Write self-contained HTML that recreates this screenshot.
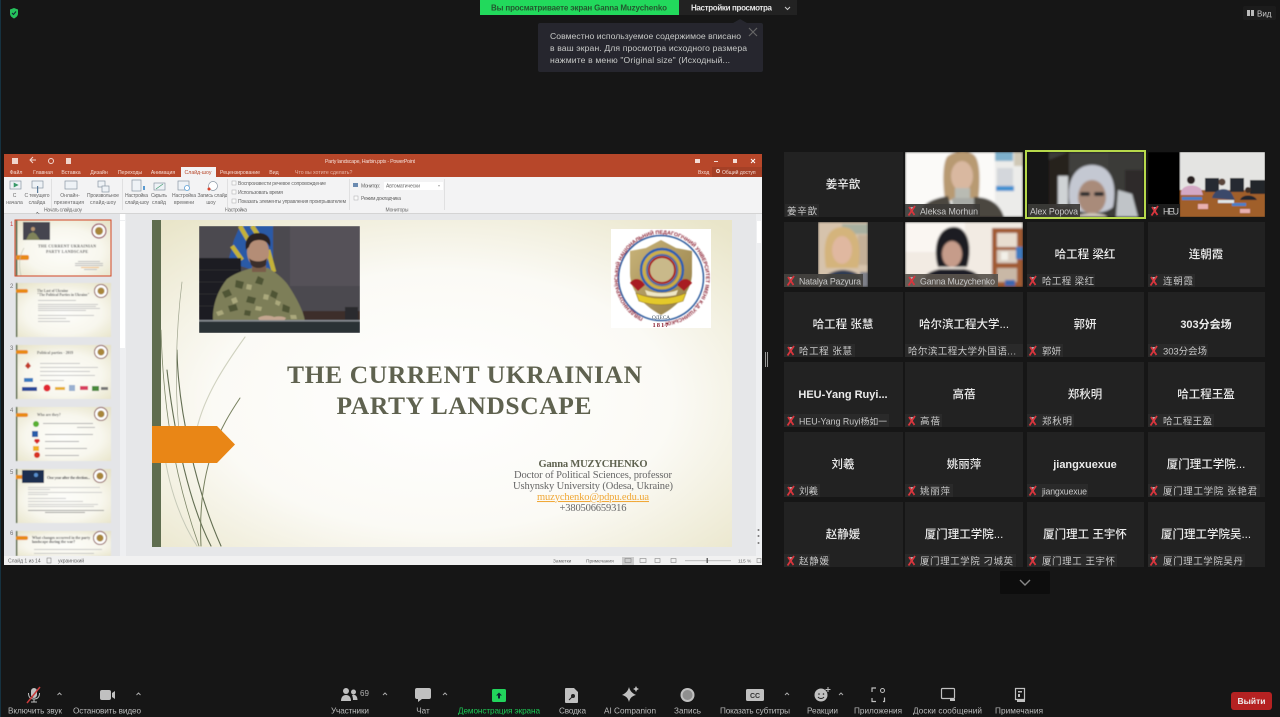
<!DOCTYPE html>
<html><head><meta charset="utf-8"><style>
html,body{margin:0;padding:0;background:#141414;width:1280px;height:717px;overflow:hidden}
svg{display:block}
text{font-family:"Liberation Sans","Noto Sans CJK SC",sans-serif}
.s{font-family:"Liberation Serif","Noto Serif CJK SC",serif}
.c{fill:#ececec;font-size:11.500px;font-weight:500;text-anchor:middle}
.cb{font-weight:bold;font-size:11px}
.l{fill:#c8c8c8;font-size:9.500px}
.la{font-size:8.800px}
.t{fill:#bdbdbd;font-size:8.200px;text-anchor:middle}
.r{fill:#666;font-size:5px}
.rm{fill:#666;font-size:5px;text-anchor:middle}
.tab{fill:#f6ddd5;font-size:5.200px;text-anchor:middle}
</style></head><body>
<svg width="1280" height="717" viewBox="0 0 1280 717" xmlns="http://www.w3.org/2000/svg">
<defs>
<filter id="b0" filterUnits="userSpaceOnUse" x="0" y="0" width="1280" height="717"><feGaussianBlur stdDeviation=".28"/></filter>
<filter id="b1" x="-5%" y="-5%" width="110%" height="110%"><feGaussianBlur stdDeviation=".3"/></filter>
<filter id="b2" x="-5%" y="-5%" width="110%" height="110%"><feGaussianBlur stdDeviation="1.100"/></filter>
<filter id="b3" x="-5%" y="-5%" width="110%" height="110%"><feGaussianBlur stdDeviation=".6"/></filter>
<radialGradient id="sl" cx=".5" cy=".55" r=".72"><stop offset="0" stop-color="#fff"/><stop offset=".55" stop-color="#fbfaf5"/><stop offset="1" stop-color="#e9e5c9"/></radialGradient>
<radialGradient id="th" cx=".5" cy=".55" r=".72"><stop offset="0" stop-color="#fdfdfa"/><stop offset=".55" stop-color="#f8f7ee"/><stop offset="1" stop-color="#e6e2c6"/></radialGradient>
<linearGradient id="gd" x1="0" y1="0" x2="1" y2="1"><stop offset="0" stop-color="#c9b47a"/><stop offset="1" stop-color="#927c45"/></linearGradient>
<path id="p1" d="M662 322a44 44 0 1 1 .1 0"/>
<g id="m"><path d="M-1.500 -4h2.500v4h-2.500z" fill="#aaa"/><path d="M-3.500 4.500L3 -5M-3 -4L2.500 4" stroke="#d8353c" stroke-width="1.800" fill="none"/></g>
</defs>
<g filter="url(#b0)">
<rect width="1280" height="717" fill="#141414"/>
<rect x="0" y="0" width="1" height="717" fill="#17303f"/>

<!-- top bar -->
<path d="M10 9.500l4-1.500 4 1.500v4c0 2.500-2 4-4 5-2-1-4-2.500-4-5z" fill="#27c25c"/>
<path d="M12 13l1.500 1.500 2.500-3" stroke="#123" fill="none" stroke-width="1"/>
<rect x="480" y="0" width="199" height="15" fill="#22d95c"/>
<rect x="679" y="0" width="118" height="15" fill="#222"/>
<text x="491" y="10.500" font-size="8" font-weight="bold" fill="#24592f" textLength="176">Вы просматриваете экран Ganna Muzychenko</text>
<text x="691" y="10.500" font-size="8" font-weight="bold" fill="#e6e6e6" textLength="81">Настройки просмотра</text>
<path d="M785 7l2.500 2.500L790 7" stroke="#ccc" fill="none" stroke-width="1"/>
<path d="M733 23l7-4 7 4z" fill="#25282d"/>
<rect x="538" y="23" width="225" height="49" rx="2" fill="#25282d"/>
<text x="550" y="39" font-size="8.600" fill="#c9c9c9" textLength="191">Совместно используемое содержимое вписано</text>
<text x="550" y="51" font-size="8.600" fill="#c9c9c9" textLength="197">в ваш экран. Для просмотра исходного размера</text>
<text x="550" y="63" font-size="8.600" fill="#c9c9c9" textLength="180">нажмите в меню "Original size" (Исходный...</text>
<path d="M749 28l8 8M757 28l-8 8" stroke="#666" stroke-width="1.200"/>
<rect x="1243" y="6" width="33" height="14" rx="2" fill="#1f1f1f"/>
<path d="M1247 10h3v6h-3zM1251 10h3v6h-3z" fill="#bbb"/>
<text x="1257" y="16.500" font-size="8" fill="#c8c8c8">Вид</text>

<!-- PowerPoint -->
<g filter="url(#b1)">
<rect x="4" y="154" width="758" height="411" fill="#e6e7e9"/>
<rect x="4" y="154" width="758" height="23" fill="#b7472a"/>
<rect x="4" y="177" width="758" height="36" fill="#f3f3f4"/>
<rect x="181" y="167" width="35" height="10" fill="#f3f3f4"/>
<path d="M12 158h6v6h-6z" fill="#f0d5cc"/><path d="M30 160h6M33 157l-3 3 3 3" stroke="#f3d8d0" fill="none"/><circle cx="51" cy="161" r="2.500" fill="none" stroke="#f3d8d0"/><rect x="66" y="158" width="5" height="6" fill="#f0d5cc"/>
<text x="370" y="163" font-size="5.300" fill="#f4ddd6" text-anchor="middle" textLength="90">Party landscape, Harbin.pptx - PowerPoint</text>
<rect x="695" y="159" width="5" height="4" fill="#f4ddd6"/><rect x="714" y="161" width="4" height="1" fill="#f4ddd6"/><rect x="733" y="159" width="4" height="4" fill="#f4ddd6"/><path d="M751 159l4 4M755 159l-4 4" stroke="#fff"/>
<rect x="712" y="167" width="50" height="10" fill="#a53f25"/>
<text x="698" y="174" font-size="5" fill="#f4ddd6">Вход</text><text x="722" y="174" font-size="5" fill="#f4ddd6">Общий доступ</text><circle cx="718" cy="171" r="1.500" fill="none" stroke="#f4ddd6"/>
<text class="tab" x="16" y="174">Файл</text><text class="tab" x="43" y="174">Главная</text><text class="tab" x="71" y="174">Вставка</text><text class="tab" x="99" y="174">Дизайн</text><text class="tab" x="130" y="174">Переходы</text><text class="tab" x="163" y="174">Анимация</text>
<text class="tab" style="fill:#b7472a" x="198" y="174">Слайд-шоу</text><text class="tab" x="240" y="174">Рецензирование</text><text class="tab" x="274" y="174">Вид</text><text class="tab" style="fill:#e8b7a8;text-anchor:start" x="295" y="174">Что вы хотите сделать?</text>
<!-- ribbon icons -->
<g fill="#eef2f6" stroke="#8a97a4" stroke-width=".7">
<rect x="10" y="181" width="11" height="8"/><rect x="32" y="181" width="11" height="7"/><rect x="65" y="181" width="12" height="8"/><rect x="98" y="181" width="7" height="6"/><rect x="102" y="186" width="7" height="6"/><rect x="132" y="180" width="9" height="11"/><rect x="154" y="183" width="11" height="7"/><rect x="178" y="181" width="11" height="9"/><circle cx="213" cy="186" r="4.500" fill="#fff"/></g>
<path d="M14 183l4 2-4 2zM156 189l7-5" stroke="#3a9a6a" stroke-width=".6" fill="#3a9a6a"/><circle cx="187" cy="188" r="2.500" fill="#fff" stroke="#5aa0d8" stroke-width=".8"/><circle cx="209" cy="189" r="1.500" fill="#d8402c"/><rect x="37" y="186" width="1.200" height="7" fill="#5a7a99"/><rect x="143" y="186" width="2" height="4" fill="#5a9ad0"/>
<text class="rm" x="14.500" y="197">С</text><text class="rm" x="14.500" y="204">начала</text>
<text class="rm" x="37" y="197" textLength="25">С текущего</text><text class="rm" x="37" y="204">слайда</text>
<text class="rm" x="70" y="197">Онлайн-</text><text class="rm" x="69" y="204" textLength="30">презентация</text>
<text class="rm" x="103" y="197" textLength="32">Произвольное</text><text class="rm" x="103" y="204" textLength="26">слайд-шоу</text>
<text class="rm" x="136.500" y="197" textLength="23">Настройка</text><text class="rm" x="137" y="204" textLength="24">слайд-шоу</text>
<text class="rm" x="159" y="197" textLength="16">Скрыть</text><text class="rm" x="159" y="204">слайд</text>
<text class="rm" x="184" y="197" textLength="24">Настройка</text><text class="rm" x="184" y="204">времени</text>
<text class="rm" x="212.500" y="197" textLength="30">Запись слайд</text><text class="rm" x="211" y="204">шоу</text>
<text class="rm" x="63" y="211.500" textLength="38">Начать слайд-шоу</text>
<text class="rm" x="236" y="211.500" textLength="22">Настройка</text>
<text class="rm" x="397" y="211.500" textLength="23">Мониторы</text>
<g fill="#fafafa" stroke="#aaa" stroke-width=".5"><rect x="232" y="181" width="4" height="4"/><rect x="232" y="190" width="4" height="4"/><rect x="232" y="199" width="4" height="4"/><rect x="354" y="196" width="4" height="4"/></g>
<text class="r" x="238" y="185" textLength="88">Воспроизвести речевое сопровождение</text>
<text class="r" x="238" y="194" textLength="45">Использовать время</text>
<text class="r" x="238" y="203" textLength="108">Показать элементы управления проигрывателем</text>
<rect x="353" y="183" width="5" height="4" fill="#6a8ab0"/>
<text class="r" x="361" y="187.500" textLength="19">Монитор:</text>
<rect x="384" y="182" width="59" height="8" fill="#fff"/><text class="r" x="386" y="187.500" textLength="34">Автоматически</text><path d="M438 185.500h2l-1 1z" fill="#555"/>
<text class="r" x="361" y="200" textLength="40">Режим докладчика</text>
<g fill="#dcdcdc"><rect x="51" y="179" width=".8" height="31"/><rect x="122" y="179" width=".8" height="31"/><rect x="227" y="179" width=".8" height="31"/><rect x="349" y="179" width=".8" height="31"/><rect x="444" y="179" width=".8" height="31"/></g>
<rect x="4" y="213" width="758" height=".8" fill="#cfcfcf"/>
<!-- cursor -->
<path d="M37 212v7l2-1.500 1 2.500 1-.5-1-2.500h2.500z" fill="#fff" stroke="#333" stroke-width=".5"/>

<!-- thumbs panel -->
<rect x="4" y="214" width="118" height="342" fill="#e4e5e8"/>
<rect x="120" y="214" width="6" height="342" fill="#eeeff1"/>
<rect x="120" y="221" width="5" height="127" fill="#fff"/>
<rect x="120" y="214" width="5" height="6" fill="#fff"/>
<g font-size="6" fill="#777" class="s">
<text x="10" y="226" fill="#c44">1</text><text x="10" y="288">2</text><text x="10" y="350">3</text><text x="10" y="412">4</text><text x="10" y="474">5</text><text x="10" y="535">6</text></g>
<g filter="url(#b3)">
<!-- thumb 1 -->
<rect x="15" y="220" width="96" height="56" fill="url(#th)"/>
<rect x="15.500" y="220" width="2" height="56" fill="#5b6b4c"/>
<rect x="23" y="222" width="27" height="18" fill="#454550"/><path d="M26 240l3-6 4-2 3 2 4 6z" fill="#80835a"/><circle cx="33" cy="229" r="2" fill="#b8946f"/>
<circle cx="99" cy="231" r="8" fill="#fff"/><circle cx="99" cy="231" r="7" fill="none" stroke="#8c3a4a" stroke-width="1.200"/><circle cx="99" cy="231" r="4" fill="#a8863a"/>
<rect x="16" y="255" width="13" height="5" rx="2" fill="#e98a19"/>
<text class="s" x="67" y="247.500" font-size="4" font-weight="bold" fill="#555" text-anchor="middle" textLength="58">THE CURRENT UKRAINIAN</text>
<text class="s" x="67" y="253" font-size="4" font-weight="bold" fill="#555" text-anchor="middle" textLength="42">PARTY LANDSCAPE</text>
<g fill="#bbb"><rect x="78" y="261" width="22" height="1"/><rect x="75" y="263" width="28" height="1"/><rect x="75" y="265" width="28" height="1"/><rect x="81" y="267" width="18" height="1" fill="#eeb870"/><rect x="84" y="269" width="13" height="1"/></g>
<path d="M21 276C18 262 20 255 24 248" stroke="#b8bca8" fill="none" stroke-width=".6"/>
<!-- thumb 2 -->
<rect x="16" y="283" width="95" height="54" fill="url(#th)"/><rect x="16" y="283" width="1.500" height="54" fill="#5b6b4c"/>
<rect x="16" y="289" width="12" height="4" rx="2" fill="#e98a19"/>
<circle cx="101" cy="291" r="6.500" fill="#fff" stroke="#8c5a5a"/><circle cx="101" cy="291" r="3.500" fill="#a8863a"/>
<text class="s" x="37" y="292" font-size="3.600" font-weight="bold" fill="#666">The Last of Ukraine</text>
<text class="s" x="37" y="296" font-size="3.600" font-weight="bold" fill="#666">"The Political Parties in Ukraine"</text>
<g fill="#bbb"><rect x="38" y="300" width="38" height=".8"/><rect x="38" y="304" width="60" height=".8"/><rect x="38" y="306" width="58" height=".8"/><rect x="38" y="308" width="62" height=".8"/><rect x="38" y="310" width="48" height=".8"/><rect x="38" y="315" width="56" height=".8"/><rect x="38" y="318" width="28" height=".8"/><rect x="38" y="321" width="32" height=".8"/></g>
<!-- thumb 3 -->
<rect x="16" y="345" width="95" height="54" fill="url(#th)"/><rect x="16" y="345" width="1.500" height="54" fill="#5b6b4c"/>
<rect x="16" y="350" width="12" height="4" rx="2" fill="#e98a19"/>
<circle cx="101" cy="352" r="6.500" fill="#fff" stroke="#8c5a5a"/><circle cx="101" cy="352" r="3.500" fill="#a8863a"/>
<text class="s" x="37" y="354" font-size="3.800" font-weight="bold" fill="#666">Political parties - 2019</text>
<g fill="#bbb"><rect x="40" y="363" width="40" height=".8"/><rect x="40" y="367" width="58" height=".8"/><rect x="40" y="371" width="50" height=".8"/><rect x="40" y="375" width="55" height=".8"/><rect x="40" y="380" width="24" height=".8"/></g>
<path d="M28 362l3 4-3 3-3-3z" fill="#c23a2c"/><rect x="24" y="378" width="9" height="4" fill="#3a7cc0"/><rect x="22" y="387" width="15" height="4" fill="#2a4a9a"/><circle cx="47" cy="388" r="3.500" fill="#e22830"/><rect x="55" y="387" width="10" height="3" fill="#e8b030"/><rect x="69" y="385" width="6" height="6" fill="#9ab0d0"/><rect x="80" y="386" width="8" height="4" fill="#d84060"/><rect x="92" y="386" width="7" height="5" fill="#4a8a3a"/><rect x="101" y="387" width="7" height="3" fill="#777"/>
<!-- thumb 4 -->
<rect x="16" y="407" width="95" height="54" fill="url(#th)"/><rect x="16" y="407" width="1.500" height="54" fill="#5b6b4c"/>
<rect x="16" y="413" width="12" height="4" rx="2" fill="#e98a19"/>
<circle cx="101" cy="414" r="6.500" fill="#fff" stroke="#8c5a5a"/><circle cx="101" cy="414" r="3.500" fill="#a8863a"/>
<text class="s" x="37" y="416" font-size="3.800" font-weight="bold" fill="#666">Who are they?</text>
<circle cx="36" cy="424" r="3" fill="#58b030"/><rect x="32" y="431" width="6" height="6" fill="#2a5ca8"/><path d="M34 441l3 3 3-3-1-2h-4z" fill="#d82828"/><rect x="33" y="446" width="6" height="5" fill="#f0b020"/><circle cx="37" cy="455" r="3" fill="#d83020"/>
<g fill="#aaa"><rect x="43" y="423" width="50" height=".9"/><rect x="77" y="427" width="18" height=".8"/><rect x="45" y="434" width="48" height=".9"/><rect x="45" y="441" width="34" height=".9"/><rect x="45" y="448" width="42" height=".9"/><rect x="45" y="455" width="34" height=".9"/></g>
<!-- thumb 5 -->
<rect x="16" y="469" width="95" height="54" fill="url(#th)"/><rect x="16" y="469" width="1.500" height="54" fill="#5b6b4c"/>
<rect x="16" y="475" width="7" height="4" fill="#e98a19"/>
<rect x="22" y="470" width="22" height="13" fill="#1c2f4f"/><circle cx="36" cy="475" r="2" fill="#5a90d0"/>
<circle cx="100" cy="476" r="6.500" fill="#fff" stroke="#8c5a5a"/><circle cx="100" cy="476" r="3.500" fill="#a8863a"/>
<text class="s" x="47" y="479" font-size="4.200" font-weight="bold" fill="#555" textLength="43">One year after the election...</text>
<g fill="#c4c4c4"><rect x="28" y="487" width="72" height=".8"/><rect x="28" y="489" width="22" height=".8"/><rect x="28" y="492" width="74" height=".8"/><rect x="28" y="494" width="20" height=".8"/><rect x="28" y="498" width="38" height=".8"/><rect x="28" y="501" width="55" height=".8"/><rect x="28" y="504" width="70" height=".8"/><rect x="28" y="506" width="66" height=".8"/><rect x="28" y="510" width="76" height=".8" fill="#888"/><rect x="45" y="512" width="40" height=".8" fill="#888"/></g>
<!-- thumb 6 -->
<rect x="16" y="531" width="95" height="25" fill="url(#th)"/><rect x="16" y="531" width="1.500" height="25" fill="#5b6b4c"/>
<rect x="16" y="536" width="12" height="4" rx="2" fill="#e98a19"/>
<circle cx="100" cy="538" r="6.500" fill="#fff" stroke="#8c5a5a"/><circle cx="100" cy="538" r="3.500" fill="#a8863a"/>
<text class="s" x="32" y="539" font-size="3.800" font-weight="bold" fill="#555">What changes occurred in the party</text>
<text class="s" x="32" y="543" font-size="3.800" font-weight="bold" fill="#555">landscape during the war?</text>
<g fill="#bbb"><rect x="34" y="549" width="68" height=".8"/><rect x="34" y="553" width="60" height=".8"/></g>
</g>
<rect x="15" y="220" width="96" height="56" fill="none" stroke="#d24726" stroke-width="1"/>

<!-- slide -->
<rect x="152" y="220" width="580" height="327" fill="url(#sl)"/>
<rect x="152" y="220" width="9" height="327" fill="#5f6d50"/>
<g fill="none" stroke-linecap="round">
<path d="M161 330C163 400 172 470 199 546" stroke="#7d8668" stroke-width=".8"/>
<path d="M167 370C175 440 190 505 211 546" stroke="#636e52" stroke-width="1.100"/>
<path d="M177 350C178 410 196 490 221 546" stroke="#636e52" stroke-width="1.100"/>
<path d="M182 282C176 330 174 390 180 440" stroke="#9fa48e" stroke-width=".7"/>
<path d="M240 398C222 425 197 465 201 546" stroke="#77805f" stroke-width="1"/>
<path d="M245 337C225 365 205 395 197 428" stroke="#d0d2c0" stroke-width="1.100"/>
<path d="M162 430C165 480 180 520 197 546" stroke="#c6c9b8" stroke-width="1"/>
</g>
<path d="M152 426h65l18 18.500-18 18.500h-65z" fill="#e98612"/>

<!-- photo -->
<svg x="199" y="226" width="161" height="107" viewBox="199 226 161 107"><g filter="url(#b3)">
<rect x="199" y="226" width="161" height="107" fill="#4c4a50"/>
<rect x="290" y="226" width="70" height="60" fill="#545158"/>
<path d="M228 262l6-22 6-14h33v50l-20-6z" fill="#2a5aa6"/>
<path d="M240 226l14 24M252 226l12 18M232 246l10 14M268 250l6 22" stroke="#c4b238" stroke-width="4.500" fill="none"/>
<rect x="199" y="258" width="42" height="63" fill="#1f1d23"/>
<path d="M199 270h40M199 282h40M199 294h40M199 306h40" stroke="#2c2a30"/>
<rect x="303" y="311" width="57" height="10" fill="#3c2e2a"/>
<rect x="345" y="307" width="13" height="14" fill="#2a2a2e"/>
<path d="M213 321C212 305 218 290 227 279 235 273 245 270 252 268L268 268C275 272 283 278 288 285 296 297 303 310 305 321Z" fill="#7d7e58"/>
<path d="M222 292l7-3 3 6-7 3zM236 280l8 2-2 7-7-2zM258 276l6 3-2 6-7-2zM272 290l6 3-2 6-6-3zM228 306l8-2 2 6-8 2zM248 296l8 2-2 6-8-2zM283 304l7 3-1 6-7-2zM245 310l6 1-1 5-6-1z" fill="#4f5436"/>
<path d="M231 299l5-2 2 5-5 2zM247 284l5 1-1 5-5-1zM264 294l5 1-1 5-5-1zM276 300l5 2-2 4-4-2zM256 306l6 1-1 4-6-1zM216 312l6-2 2 4-6 2zM290 315l6 0 1 4-6 0z" fill="#aaa87c"/>
<path d="M258 318c4-3 12-3 16-1 4-1 9-1 12 1l-2 3h-24z" fill="#c4a690"/>
<rect x="252" y="262" width="14" height="10" fill="#7a5d4a"/>
<ellipse cx="258" cy="252" rx="11" ry="15" fill="#b48d76"/>
<path d="M246 250c-2-10 3-17 12-17 9 0 14 5 12 14-2-4-5-7-11-7-6 0-9 3-10 7z" fill="#2c2420"/>
<path d="M249 258c3 4 14 5 18 0l-1 7c-4 4-11 4-15 0z" fill="#3a2e29"/>
<rect x="199" y="320" width="161" height="13" fill="#2c3034"/>
<rect x="199" y="320" width="161" height="1.500" fill="#868c92"/>
</g></svg>

<!-- logo -->
<rect x="611" y="229" width="100" height="99" fill="#fff"/>
<g filter="url(#b3)">
<circle cx="661" cy="278" r="42.500" fill="none" stroke="#2c5a9c" stroke-width="1.500"/>
<text font-size="5.300" font-weight="bold" fill="#8b2434"><textPath href="#p1" startOffset="7%">ПІВДЕННОУКРАЇНСЬКИЙ НАЦІОНАЛЬНИЙ ПЕДАГОГІЧНИЙ УНІВЕРСИТЕТ ІМЕНІ К.Д.УШИНСЬКОГО</textPath></text>
<path d="M661 240l15 8 16 3v22c0 18-14 33-31 42-17-9-31-24-31-42v-22l16-3z" fill="url(#gd)"/>
<circle cx="662" cy="270" r="21" fill="none" stroke="#2b60b0" stroke-width="2.400"/>
<circle cx="662" cy="270" r="18" fill="none" stroke="#d1b33c" stroke-width="1.800"/>
<circle cx="662" cy="270" r="15" fill="none" stroke="#2b60b0" stroke-width="1.400"/>
<circle cx="662" cy="270" r="13" fill="#c9b98a" stroke="#a81f24" stroke-width="2"/>
<path d="M630 283c4-6 11-5 15 2l-7 6zM692 283c-4-6-11-5-15 2l7 6z" fill="#a81c20"/>
<path d="M636 293c16 7 34 7 50 0l-3 8c-14 5-30 5-44 0z" fill="#e4c92c" stroke="#8a6a20" stroke-width=".6"/>
<path d="M645 290c11 4 22 4 33 0l-2 5c-9 2-20 2-29 0z" fill="#efe7c6"/>
</g>
<text class="s" x="661" y="319" font-size="5.500" fill="#456" text-anchor="middle">ОДЕСА</text>
<text class="s" x="661" y="327" font-size="6.500" font-weight="bold" fill="#8b2434" text-anchor="middle" letter-spacing="1">1817</text>

<text class="s" x="464.500" y="383" font-size="25.500" font-weight="bold" fill="#5f6250" text-anchor="middle" textLength="355">THE CURRENT UKRAINIAN</text>
<text class="s" x="464" y="414" font-size="25.500" font-weight="bold" fill="#5f6250" text-anchor="middle" textLength="255">PARTY LANDSCAPE</text>
<text class="s" x="593" y="467" font-size="10.500" font-weight="bold" fill="#5f6250" text-anchor="middle" textLength="109">Ganna MUZYCHENKO</text>
<text class="s" x="593" y="478" font-size="10.500" fill="#666" text-anchor="middle" textLength="158">Doctor of Political Sciences, professor</text>
<text class="s" x="593" y="489" font-size="10.500" fill="#666" text-anchor="middle" textLength="160">Ushynsky University (Odesa, Ukraine)</text>
<text class="s" x="593" y="500" font-size="10.500" fill="#f0a838" text-anchor="middle" textLength="112" text-decoration="underline">muzychenko@pdpu.edu.ua</text>
<text class="s" x="593" y="511" font-size="10.500" fill="#666" text-anchor="middle" textLength="67">+380506659316</text>

<!-- right scrollbar -->
<rect x="756" y="214" width="6" height="342" fill="#eeeff1"/><rect x="757" y="221" width="4" height="22" fill="#fff"/>
<g fill="#777"><circle cx="758.500" cy="530" r="1"/><circle cx="758.500" cy="536" r="1"/><circle cx="758.500" cy="543" r="1"/></g>
<!-- status -->
<rect x="4" y="556" width="758" height="9" fill="#f1f1f1"/>
<text x="8" y="562.500" font-size="5" fill="#666">Слайд 1 из 14</text><text x="58" y="562.500" font-size="5" fill="#666">украинский</text>
<rect x="47" y="558" width="4" height="5" fill="none" stroke="#888" stroke-width=".6"/>
<text x="553" y="562.500" font-size="4.800" fill="#666">Заметки</text><text x="586" y="562.500" font-size="4.800" fill="#666">Примечания</text>
<rect x="622" y="557" width="12" height="8" fill="#ccc"/>
<g fill="none" stroke="#888" stroke-width=".6"><rect x="625" y="558.500" width="6" height="4"/><rect x="640" y="558.500" width="6" height="4"/><rect x="655" y="558.500" width="5" height="4"/><rect x="671" y="558.500" width="5" height="4"/><rect x="757" y="558.500" width="4" height="4"/></g>
<rect x="685" y="560.500" width="46" height=".6" fill="#999"/><rect x="706.500" y="558" width="1.500" height="5" fill="#666"/>
<text x="738" y="562.500" font-size="4.800" fill="#666">115 %</text>
</g>

<!-- splitter -->
<rect x="765" y="352" width="1" height="15" fill="#9a9a9a"/><rect x="767" y="352" width="1" height="15" fill="#9a9a9a"/>

<!-- gallery -->
<g fill="#212121">
<rect x="784" y="152" width="119" height="65"/><rect x="905" y="152" width="118" height="65"/><rect x="1148" y="152" width="117" height="65"/>
<rect x="784" y="222" width="119" height="65"/><rect x="905" y="222" width="118" height="65"/><rect x="1027" y="222" width="117" height="65"/><rect x="1148" y="222" width="117" height="65"/>
<rect x="784" y="292" width="119" height="65"/><rect x="905" y="292" width="118" height="65"/><rect x="1027" y="292" width="117" height="65"/><rect x="1148" y="292" width="117" height="65"/>
<rect x="784" y="362" width="119" height="65"/><rect x="905" y="362" width="118" height="65"/><rect x="1027" y="362" width="117" height="65"/><rect x="1148" y="362" width="117" height="65"/>
<rect x="784" y="432" width="119" height="65"/><rect x="905" y="432" width="118" height="65"/><rect x="1027" y="432" width="117" height="65"/><rect x="1148" y="432" width="117" height="65"/>
<rect x="784" y="502" width="119" height="65"/><rect x="905" y="502" width="118" height="65"/><rect x="1027" y="502" width="117" height="65"/><rect x="1148" y="502" width="117" height="65"/>
</g>

<!-- video: Aleksa -->
<svg x="905" y="152" width="118" height="65" viewBox="905 152 118 65"><g filter="url(#b2)">
<rect x="905" y="152" width="118" height="65" fill="#fbfaf8"/><rect x="995" y="152" width="28" height="65" fill="#ececea"/>
<rect x="995" y="152" width="18" height="9" fill="#7eb0cc"/><rect x="997" y="168" width="16" height="18" fill="#d4d7dc"/><rect x="996" y="186" width="18" height="5" fill="#3d8fd0"/><rect x="1014" y="152" width="9" height="14" fill="#cfc8b6"/>
<path d="M945 200c-3-20-2-40 3-44 8-6 22-6 27 0 6 8 5 30 3 46z" fill="#b89a72"/>
<ellipse cx="962" cy="176" rx="11" ry="15" fill="#d9b8a0"/>
<rect x="955" y="188" width="15" height="14" fill="#b9bbb3"/>
<path d="M918 217c2-12 12-18 30-21l7 21zM970 217l4-20c12 0 25 4 30 20z" fill="#4c4640"/>
<rect x="952" y="198" width="22" height="19" fill="#a8aaa6"/>
</g></svg>
<!-- Alex -->
<svg x="1027" y="152" width="117" height="65" viewBox="1027 152 117 65"><g filter="url(#b2)">
<rect x="1027" y="152" width="117" height="65" fill="#3b3a38"/>
<rect x="1027" y="152" width="22" height="65" fill="#171513"/><path d="M1049 160l20-8v65h-20z" fill="#28211d"/><rect x="1058" y="176" width="10" height="30" fill="#cfd3d5"/><rect x="1069" y="152" width="40" height="20" fill="#403f3c"/>
<rect x="1125" y="170" width="19" height="47" fill="#2d2c2a"/><path d="M1118 190l14 4 6 23h-22z" fill="#c0c4c8"/>
<path d="M1070 206c-5-26 6-41 22-41 17 0 26 15 21 42-8 8-34 8-43-1z" fill="#c4c8d2"/>
<ellipse cx="1092" cy="197" rx="14" ry="17" fill="#a98b7a"/>
<rect x="1080" y="192" width="10" height="4" rx="2" fill="#24252a"/><rect x="1094" y="192" width="10" height="4" rx="2" fill="#24252a"/>
<path d="M1077 217c2-5 28-5 30 0z" fill="#cfc8bc"/>
</g></svg>
<rect x="1026" y="151" width="119" height="67" fill="none" stroke="#b7d94c" stroke-width="2"/>
<!-- HEU -->
<svg x="1148" y="152" width="117" height="65" viewBox="1148 152 117 65"><g filter="url(#b3)">
<rect x="1148" y="152" width="32" height="65" fill="#050505"/>
<rect x="1180" y="152" width="85" height="40" fill="#e4e4e2"/><rect x="1180" y="190" width="85" height="27" fill="#a05e2c"/>
<rect x="1205" y="178" width="14" height="14" fill="#262a30"/><rect x="1230" y="178" width="14" height="14" fill="#262a30"/><rect x="1250" y="180" width="15" height="14" fill="#22262c"/>
<circle cx="1191" cy="180" r="4" fill="#2c2220"/><path d="M1181 193c0-8 14-10 20-4l2 6h-22z" fill="#d4a8c4"/>
<circle cx="1222" cy="182" r="3.500" fill="#5a443a"/><path d="M1212 198c2-10 16-12 20-4l3 6z" fill="#3a4a6a"/>
<circle cx="1248" cy="190" r="3" fill="#3c2e28"/><path d="M1240 200c2-6 14-6 17 0z" fill="#22262e"/>
<rect x="1182" y="197" width="20" height="3" fill="#4a80c8"/><rect x="1218" y="200" width="16" height="3" fill="#dfe6e8"/><rect x="1232" y="203" width="14" height="3" fill="#4a80c8"/><rect x="1198" y="204" width="10" height="5" fill="#e8b0b0"/><rect x="1240" y="209" width="10" height="4" fill="#e8b0b0"/>
</g></svg>
<!-- Natalya -->
<svg x="818" y="222" width="50" height="65" viewBox="818 222 50 65"><g filter="url(#b2)">
<rect x="818" y="222" width="50" height="65" fill="#d6c3ac"/><rect x="842" y="224" width="26" height="10" fill="#a8b0a0"/><rect x="858" y="235" width="10" height="30" fill="#c4b098"/>
<path d="M826 268c-3-20-2-40 16-41 16 0 20 18 16 41z" fill="#d4b47c"/>
<ellipse cx="842" cy="250" rx="10" ry="14" fill="#e0b8a0"/>
<path d="M820 287c2-12 12-16 22-17 10 0 22 4 24 17z" fill="#2e3a52"/>
<rect x="860" y="272" width="8" height="15" fill="#7e8088"/>
</g></svg>
<!-- Ganna -->
<svg x="905" y="222" width="118" height="65" viewBox="905 222 118 65"><g filter="url(#b2)">
<rect x="905" y="222" width="118" height="65" fill="#f2ebe3"/><rect x="905" y="222" width="60" height="30" fill="#faf6f2"/>
<rect x="992" y="228" width="31" height="59" fill="#a05a30"/>
<rect x="997" y="233" width="20" height="14" fill="#e8ddd0"/><rect x="997" y="250" width="20" height="13" fill="#dcd0c4"/><rect x="997" y="268" width="20" height="14" fill="#c9b8a6"/><rect x="1016" y="247" width="7" height="12" fill="#3e7ac0"/><rect x="1001" y="252" width="7" height="8" fill="#f2f0e8"/><rect x="1005" y="280" width="10" height="6" fill="#3a66b0"/>
<path d="M938 267c-5-16-2-38 14-40 16-2 21 20 15 40z" fill="#1d1a22"/>
<ellipse cx="952" cy="254" rx="10" ry="13" fill="#c69c8a"/>
<path d="M920 287c2-12 10-16 20-18h24c10 2 18 6 20 18z" fill="#1e1c26"/>
</g></svg>

<!-- center names -->
<g>
<text class="c" x="843" y="188">姜辛歆</text>
<text class="c" x="1085" y="258">哈工程 梁红</text><text class="c" x="1206" y="258">连朝霞</text>
<text class="c" x="843" y="328">哈工程 张慧</text><text class="c" x="964" y="328">哈尔滨工程大学...</text><text class="c" x="1085" y="328">郭妍</text><text class="c cb" x="1206" y="328">303分会场</text>
<text class="c cb" x="843" y="398">HEU-Yang  Ruyi...</text><text class="c" x="964" y="398">高蓓</text><text class="c" x="1085" y="398">郑秋明</text><text class="c" x="1206" y="398">哈工程王盈</text>
<text class="c" x="843" y="468">刘羲</text><text class="c" x="964" y="468">姚丽萍</text><text class="c cb" x="1085" y="468">jiangxuexue</text><text class="c" x="1206" y="468">厦门理工学院...</text>
<text class="c" x="843" y="538">赵静媛</text><text class="c" x="964" y="538">厦门理工学院...</text><text class="c" x="1085" y="538">厦门理工 王宇怀</text><text class="c" x="1206" y="538">厦门理工学院吴...</text>
</g>

<!-- label backgrounds -->
<g fill="#2a2a2a" opacity=".92">
<rect x="785" y="204" width="34" height="13"/>
<rect x="905" y="204" width="75" height="13" fill="#3c3a38"/><rect x="1028" y="204" width="52" height="13" fill="#3c3a38"/><rect x="1148" y="204" width="32" height="13" fill="#202020"/>
<rect x="784" y="274" width="79" height="13" fill="#45433f"/><rect x="905" y="274" width="93" height="13" fill="#5a544e"/><rect x="1027" y="274" width="68" height="13"/><rect x="1148" y="274" width="47" height="13"/>
<rect x="784" y="344" width="71" height="13"/><rect x="905" y="344" width="118" height="13"/><rect x="1027" y="344" width="36" height="13"/><rect x="1148" y="344" width="60" height="13"/>
<rect x="784" y="414" width="105" height="13"/><rect x="905" y="414" width="37" height="13"/><rect x="1027" y="414" width="47" height="13"/><rect x="1148" y="414" width="66" height="13"/>
<rect x="784" y="484" width="36" height="13"/><rect x="905" y="484" width="48" height="13"/><rect x="1027" y="484" width="61" height="13"/><rect x="1148" y="484" width="112" height="13"/>
<rect x="784" y="554" width="46" height="13"/><rect x="905" y="554" width="111" height="13"/><rect x="1027" y="554" width="90" height="13"/><rect x="1148" y="554" width="97" height="13"/>
</g>

<!-- mute icons -->
<g>
<use href="#m" x="791" y="281"/><use href="#m" x="912" y="211"/><use href="#m" x="1155" y="211"/><use href="#m" x="912" y="281"/><use href="#m" x="1033" y="281"/><use href="#m" x="1154" y="281"/>
<use href="#m" x="791" y="351"/><use href="#m" x="1033" y="351"/><use href="#m" x="1154" y="351"/>
<use href="#m" x="791" y="421"/><use href="#m" x="912" y="421"/><use href="#m" x="1033" y="421"/><use href="#m" x="1154" y="421"/>
<use href="#m" x="791" y="491"/><use href="#m" x="912" y="491"/><use href="#m" x="1033" y="491"/><use href="#m" x="1154" y="491"/>
<use href="#m" x="791" y="561"/><use href="#m" x="912" y="561"/><use href="#m" x="1033" y="561"/><use href="#m" x="1154" y="561"/>
</g>

<!-- labels -->
<g>
<text class="l" x="787" y="214.500" textLength="30">姜辛歆</text><text class="l la" x="920" y="214.500" textLength="58">Aleksa Morhun</text><text class="l la" x="1030" y="214.500" textLength="48">Alex Popova</text><text class="l la" x="1163" y="214.500" textLength="16">HEU</text>
<text class="l la" x="799" y="284.500" textLength="62">Natalya Pazyura</text><text class="l la" x="920" y="284.500" textLength="75">Ganna Muzychenko</text><text class="l" x="1042" y="284.500" textLength="52">哈工程 梁红</text><text class="l" x="1163" y="284.500" textLength="30">连朝霞</text>
<text class="l" x="799" y="354.500" textLength="53">哈工程 张慧</text><text class="l" x="908" y="354.500" textLength="108">哈尔滨工程大学外国语...</text><text class="l" x="1042" y="354.500" textLength="19">郭妍</text><text class="l" x="1163" y="354.500" textLength="44">303分会场</text>
<text class="l la" x="799" y="424.500" textLength="88">HEU-Yang Ruyi杨如一</text><text class="l" x="920" y="424.500" textLength="20">高蓓</text><text class="l" x="1042" y="424.500" textLength="30">郑秋明</text><text class="l" x="1163" y="424.500" textLength="49">哈工程王盈</text>
<text class="l" x="799" y="494.500" textLength="19">刘羲</text><text class="l" x="920" y="494.500" textLength="30">姚丽萍</text><text class="l la" x="1042" y="494.500" textLength="45">jiangxuexue</text><text class="l" x="1163" y="494.500" textLength="94">厦门理工学院 张艳君</text>
<text class="l" x="799" y="564.500" textLength="30">赵静媛</text><text class="l" x="920" y="564.500" textLength="93">厦门理工学院 刁城英</text><text class="l" x="1042" y="564.500" textLength="73">厦门理工 王宇怀</text><text class="l" x="1163" y="564.500" textLength="80">厦门理工学院吴丹</text>
</g>

<!-- down button -->
<rect x="1000" y="571" width="50" height="23" rx="1" fill="#0f0f0f"/>
<path d="M1020 580l5 5 5-5" fill="none" stroke="#888" stroke-width="1.400"/>

<!-- toolbar -->
<g fill="#c0c0c0">
<rect x="31" y="688" width="6" height="10" rx="3"/><path d="M28.500 693c0 4 2 6 5.500 6s5.500-2 5.500-6M34 699v3h-3h6" fill="none" stroke="#c0c0c0"/>
<path d="M27 703L40 687" stroke="#c93a3a" stroke-width="1.500"/>
<rect x="100" y="690" width="11" height="10" rx="2"/><path d="M112 693l3-2v8l-3-2z"/>
<circle cx="346" cy="691" r="3"/><path d="M341 701c0-4 2-6 5-6s5 2 5 6z"/><circle cx="353.500" cy="692" r="2.500"/><path d="M352 695c3-1 5.500 1 5.500 5h-4.500c0-2-.4-3.500-1-5z"/>
<path d="M417 688h12a2 2 0 0 1 2 2v7a2 2 0 0 1-2 2h-7l-4 3v-3h-1a2 2 0 0 1-2-2v-7a2 2 0 0 1 2-2z"/>
<path d="M566 688h8l4 4v10a1 1 0 0 1-1 1h-11a1 1 0 0 1-1-1v-13a1 1 0 0 1 1-1z"/>
<path d="M629 687c1 4 3 6 7 8-4 1-6 3-7 7-1-4-3-6-7-7 4-2 6-4 7-8zM636 686l1 2 2 1-2 1-1 2-1-2-2-1 2-1z"/>
<circle cx="687.500" cy="695" r="7"/><circle cx="687.500" cy="695" r="5" fill="#8f8f8f"/>
<rect x="746" y="689" width="18" height="12" rx="1.500"/>
<circle cx="821" cy="695" r="6.500"/><path d="M828 687v5M825.500 689.500h5" stroke="#c0c0c0" fill="none"/>
</g>
<text x="755" y="698" font-size="7" font-weight="bold" fill="#333" text-anchor="middle">CC</text>
<circle cx="819" cy="694" r=".8" fill="#222"/><circle cx="823.500" cy="694" r=".8" fill="#222"/><path d="M818 697c1.500 2 4.500 2 6 0" stroke="#222" fill="none"/>
<circle cx="573" cy="696" r="2" fill="#222"/><path d="M569 700l3-3" stroke="#222"/>
<path d="M876 688h-4v4M872 698v3.500h4M883 701.500h1.500v-4" fill="none" stroke="#c0c0c0" stroke-width="1.200"/><circle cx="882.500" cy="690.500" r="2" fill="none" stroke="#c0c0c0"/>
<rect x="941.500" y="688.500" width="13" height="10" rx="1" fill="none" stroke="#c0c0c0" stroke-width="1.200"/><rect x="950" y="699" width="5" height="2" fill="#c0c0c0"/>
<path d="M1015.500 688.500h9v11h-9z" fill="none" stroke="#c0c0c0" stroke-width="1.200"/><path d="M1018 691h4v1.500h-4zM1018 694h2v3h-2z" fill="#c0c0c0"/><rect x="1017" y="700" width="8" height="2" fill="#c0c0c0"/>
<rect x="492" y="689" width="14" height="13" rx="1.500" fill="#20d45c"/><path d="M499 692.500l-3 3h2v3h2v-3h2z" fill="#123"/>
<g fill="none" stroke="#a8a8a8" stroke-width="1">
<path d="M57.500 695l2-2 2 2M136.500 695l2-2 2 2M383 695l2-2 2 2M443 695l2-2 2 2M785 695l2-2 2 2M839 695l2-2 2 2"/>
</g>
<text x="360" y="696" font-size="8" fill="#b0b0b0">69</text>
<g>
<text class="t" x="35" y="713.500" textLength="54">Включить звук</text>
<text class="t" x="107" y="713.500" textLength="68">Остановить видео</text>
<text class="t" x="350" y="713.500" textLength="38">Участники</text>
<text class="t" x="423" y="713.500">Чат</text>
<text class="t" x="499" y="713.500" textLength="82" style="fill:#1ecb55">Демонстрация экрана</text>
<text class="t" x="572.500" y="713.500" textLength="27">Сводка</text>
<text class="t" x="630" y="713.500" textLength="52">AI Companion</text>
<text class="t" x="687.500" y="713.500" textLength="27">Запись</text>
<text class="t" x="755" y="713.500" textLength="70">Показать субтитры</text>
<text class="t" x="822.500" y="713.500" textLength="31">Реакции</text>
<text class="t" x="878" y="713.500" textLength="48">Приложения</text>
<text class="t" x="947.500" y="713.500" textLength="69">Доски сообщений</text>
<text class="t" x="1019" y="713.500" textLength="48">Примечания</text>
</g>
<rect x="1231" y="692" width="41" height="18" rx="3" fill="#b52222"/>
<text x="1251.500" y="704" font-size="8.500" font-weight="bold" fill="#eee" text-anchor="middle">Выйти</text>
</g>
</svg>
</body></html>
